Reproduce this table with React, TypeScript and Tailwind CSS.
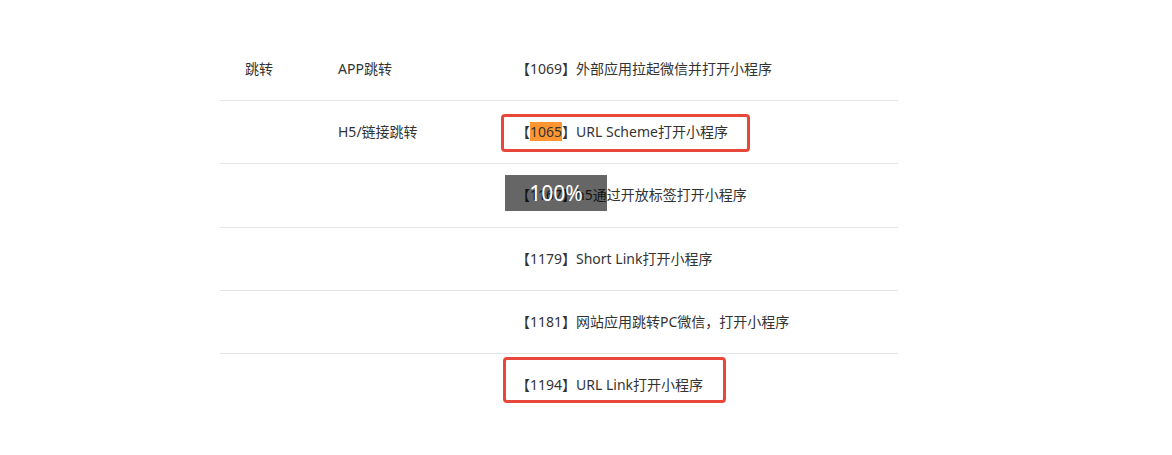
const rows = [
  { c1: "跳转", c2: "APP跳转", c3: "【1069】外部应用拉起微信并打开小程序", h: "h-[63px]" },
  { c1: "", c2: "H5/链接跳转", c3: "", h: "h-[63px]" },
  { c1: "", c2: "", c3: "【1167】h5通过开放标签打开小程序", h: "h-[64px]" },
  { c1: "", c2: "", c3: "【1179】Short Link打开小程序", h: "h-[63px]" },
  { c1: "", c2: "", c3: "【1181】网站应用跳转PC微信，打开小程序", h: "h-[63px]" },
  { c1: "", c2: "", c3: "【1194】URL Link打开小程序", h: "h-[63px]" },
];

function Cell3({ index, text }: { index: number; text: string }) {
  if (index === 1) {
    return (
      <>
        【<mark className="bg-[#ff9632] text-[#333]">1065</mark>】URL Scheme打开小程序
        <div className="absolute left-[12px] top-[13px] w-[249px] h-[38px] border-[3px] border-[#e8473c] rounded-[4px]" />
      </>
    );
  }
  return (
    <>
      {text}
      {index === 2 && (
        <div className="absolute left-[16px] top-[11px] w-[102px] h-[36px] bg-black/60 text-white text-[21px] leading-[36px] text-center">
          100%
        </div>
      )}
      {index === 5 && (
        <div className="absolute left-[14px] top-[3px] w-[223px] h-[46px] border-[3px] border-[#e8473c] rounded-[4px]" />
      )}
    </>
  );
}

export default function App() {
  return (
    <div className="w-[1172px] h-[455px] bg-white font-['Noto_Sans','Noto_Sans_CJK_SC',sans-serif] text-[14px] text-[#333]">
      <div className="ml-[220px] w-[678px] pt-[38px]">
        {rows.map((r, i) => (
          <div
            key={i}
            className={`flex ${r.h} items-center ${i < rows.length - 1 ? "border-b border-[#e5e5e5]" : ""}`}
          >
            <div className="w-[93px] pl-[25px] pb-[2px]">{r.c1}</div>
            <div className="w-[176px] pl-[25px] pb-[2px]">{r.c2}</div>
            <div className="relative flex-1 h-full flex items-center pl-[27px] pb-[2px]">
              <span className="whitespace-nowrap">
                <Cell3 index={i} text={r.c3} />
              </span>
            </div>
          </div>
        ))}
      </div>
    </div>
  );
}
